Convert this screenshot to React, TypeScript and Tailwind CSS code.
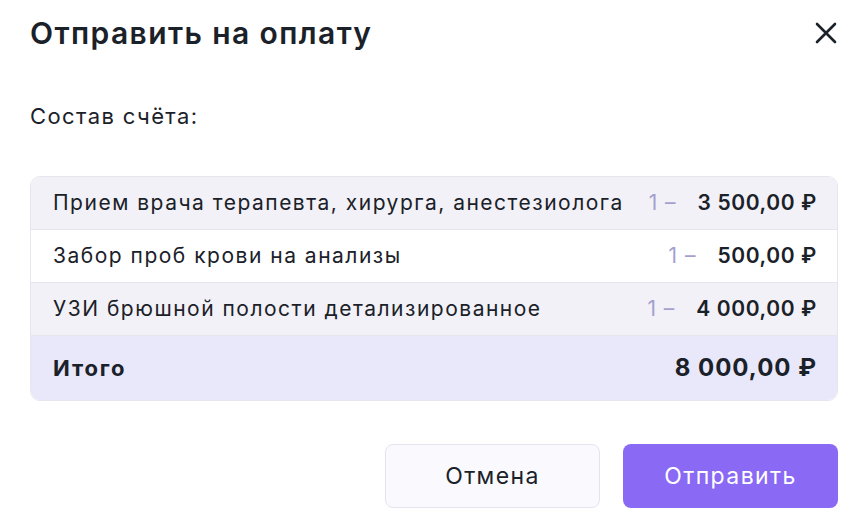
interface InvoiceItem {
  name: string
  qty: number
  price: string
}

const items: InvoiceItem[] = [
  { name: 'Прием врача терапевта, хирурга, анестезиолога', qty: 1, price: '3 500,00 ₽' },
  { name: 'Забор проб крови на анализы', qty: 1, price: '500,00 ₽' },
  { name: 'УЗИ брюшной полости детализированное', qty: 1, price: '4 000,00 ₽' },
]

export default function App() {
  return (
    <div
      className="w-[862px] h-[522px] bg-white pl-[30px] pr-[24px] text-[#1b2129]"
      style={{ fontFamily: 'Inter, "Noto Sans", sans-serif' }}
    >
      {/* header */}
      <div className="flex items-center justify-between h-[66px]">
        <h1 className="text-[30px] font-semibold tracking-[1.4px]">Отправить на оплату</h1>
        <button className="mr-[1px]">
          <svg width="22" height="22" viewBox="0 0 22 22" fill="none">
            <path d="M2 2L20 20M20 2L2 20" stroke="#1b2129" strokeWidth="2.6" strokeLinecap="round" />
          </svg>
        </button>
      </div>

      <p className="mt-[34px] text-[22px] leading-[32px] tracking-[1.4px]">Состав счёта:</p>

      {/* invoice table */}
      <div className="mt-[44px] rounded-[10px] border border-[#e6e6ee] overflow-hidden">
        {items.map((item, i) => (
          <div
            key={item.name}
            className={`flex items-center h-[53px] pl-[22px] pr-[20px] border-b border-[#e6e6ee] ${
              i % 2 === 0 ? 'bg-[#f2f1f7]' : 'bg-white'
            }`}
          >
            <span className="flex-1 text-[21px] tracking-[1.5px]">{item.name}</span>
            <span className="text-[21px] text-[#a49fcf] mr-[21px] tracking-[1px]">{item.qty} –</span>
            <span className="text-[21px] font-semibold tracking-[0.6px]">{item.price}</span>
          </div>
        ))}
        <div className="flex items-center justify-between h-[64px] pl-[22px] pr-[20px] bg-[#e8e8fa]">
          <span className="text-[22px] font-bold tracking-[1.8px]">Итого</span>
          <span className="text-[24px] font-bold tracking-[1px]">8 000,00 ₽</span>
        </div>
      </div>

      {/* actions */}
      <div className="flex justify-end gap-[23px] mt-[43px]">
        <button className="w-[215px] h-[64px] rounded-[8px] border border-[#e4e4ee] bg-[#fafafe] text-[23px] tracking-[1.4px]">
          Отмена
        </button>
        <button className="w-[215px] h-[64px] rounded-[8px] bg-[#8a6af5] text-white text-[23px] tracking-[1.4px]">
          Отправить
        </button>
      </div>
    </div>
  )
}
